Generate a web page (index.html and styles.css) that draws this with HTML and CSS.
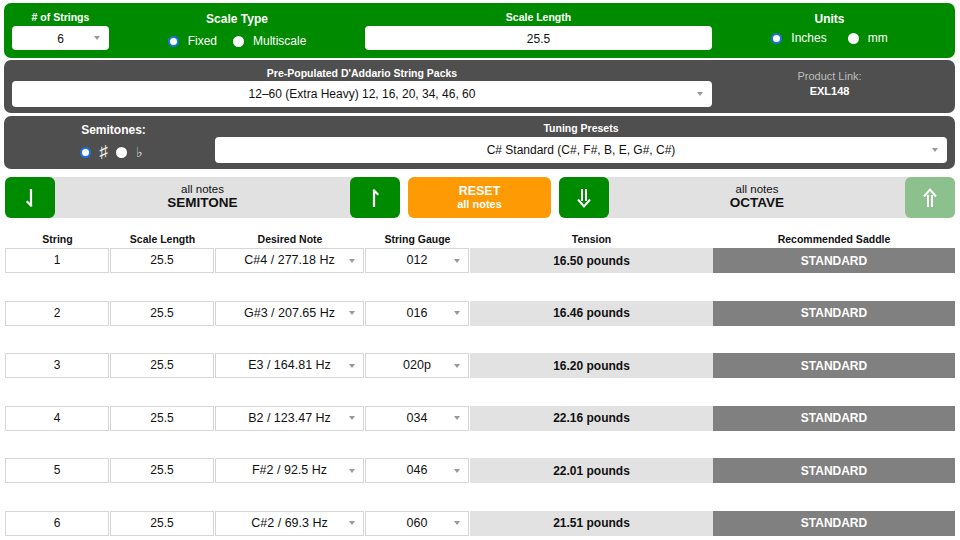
FILE: index.html
```html
<!DOCTYPE html>
<html>
<head>
<meta charset="utf-8">
<link rel="stylesheet" href="styles.css">
</head>
<body>
<div class="page">
  <section class="panel green top">
    <div class="field">
      <div class="lbl">#&nbsp;of Strings</div>
      <div class="box select small">6<span class="caret"></span></div>
    </div>
    <div class="field">
      <div class="lbl big">Scale Type</div>
      <div class="radios">
        <span class="radio on"></span><span class="rtext">Fixed</span>
        <span class="radio"></span><span class="rtext">Multiscale</span>
      </div>
    </div>
    <div class="field">
      <div class="lbl">Scale Length</div>
      <div class="box">25.5</div>
    </div>
    <div class="field units">
      <div class="lbl big">Units</div>
      <div class="radios">
        <span class="radio on"></span><span class="rtext">Inches</span>
        <span class="radio"></span><span class="rtext">mm</span>
      </div>
    </div>
  </section>

  <section class="panel dark packs">
    <div class="field">
      <div class="lbl">Pre-Populated D'Addario String Packs</div>
      <div class="box select tall">12–60 (Extra Heavy) 12, 16, 20, 34, 46, 60<span class="caret"></span></div>
    </div>
    <div class="product">
      <div class="plabel">Product Link:</div>
      <div class="pcode">EXL148</div>
    </div>
  </section>

  <section class="panel dark tuning">
    <div class="semi">
      <div class="lbl big">Semitones:</div>
      <div class="radios semi-r">
        <span class="radio on"></span><span class="acc">♯</span>
        <span class="radio"></span><span class="acc flat">♭</span>
      </div>
    </div>
    <div class="field">
      <div class="lbl">Tuning Presets</div>
      <div class="box select tall">C# Standard (C#, F#, B, E, G#, C#)<span class="caret"></span></div>
    </div>
  </section>

  <section class="shift">
    <div class="group">
      <div class="btn g">
        <svg width="12" height="20" viewBox="0 0 12 20"><path d="M7 2 V17.5 M7 17.5 L3.5 14" stroke="#fff" stroke-width="2.2" fill="none" stroke-linecap="square"/></svg>
      </div>
      <div class="gtext"><div class="small-t">all notes</div><div class="big-t">SEMITONE</div></div>
      <div class="btn g">
        <svg width="12" height="20" viewBox="0 0 12 20"><path d="M5 18 V2.5 M5 2.5 L8.5 6" stroke="#fff" stroke-width="2.2" fill="none" stroke-linecap="square"/></svg>
      </div>
    </div>
    <div class="btn reset"><div class="rt">RESET</div><div class="rs">all notes</div></div>
    <div class="group">
      <div class="btn g">
        <svg width="18" height="22" viewBox="0 0 18 22"><path d="M7 2 V14 M11 2 V14 M3 12.5 L9 19.5 L15 12.5" stroke="#fff" stroke-width="2" fill="none" stroke-linejoin="miter"/></svg>
      </div>
      <div class="gtext"><div class="small-t">all notes</div><div class="big-t">OCTAVE</div></div>
      <div class="btn lg">
        <svg width="18" height="22" viewBox="0 0 18 22"><path d="M7 20 V8 M11 20 V8 M3 9.5 L9 2.5 L15 9.5" stroke="#fff" stroke-width="2" fill="none" stroke-linejoin="miter"/></svg>
      </div>
    </div>
  </section>

  <section class="table">
    <div class="thead">
      <div>String</div><div>Scale Length</div><div>Desired Note</div><div>String Gauge</div><div>Tension</div><div>Recommended Saddle</div>
    </div>
    <div class="rows">
      <div class="row"><div class="cell">1</div><div class="cell">25.5</div><div class="cell sel">C#4 / 277.18 Hz<span class="caret"></span></div><div class="cell sel">012<span class="caret"></span></div><div class="tension">16.50 pounds</div><div class="saddle">STANDARD</div></div>
      <div class="row"><div class="cell">2</div><div class="cell">25.5</div><div class="cell sel">G#3 / 207.65 Hz<span class="caret"></span></div><div class="cell sel">016<span class="caret"></span></div><div class="tension">16.46 pounds</div><div class="saddle">STANDARD</div></div>
      <div class="row"><div class="cell">3</div><div class="cell">25.5</div><div class="cell sel">E3 / 164.81 Hz<span class="caret"></span></div><div class="cell sel">020p<span class="caret"></span></div><div class="tension">16.20 pounds</div><div class="saddle">STANDARD</div></div>
      <div class="row"><div class="cell">4</div><div class="cell">25.5</div><div class="cell sel">B2 / 123.47 Hz<span class="caret"></span></div><div class="cell sel">034<span class="caret"></span></div><div class="tension">22.16 pounds</div><div class="saddle">STANDARD</div></div>
      <div class="row"><div class="cell">5</div><div class="cell">25.5</div><div class="cell sel">F#2 / 92.5 Hz<span class="caret"></span></div><div class="cell sel">046<span class="caret"></span></div><div class="tension">22.01 pounds</div><div class="saddle">STANDARD</div></div>
      <div class="row"><div class="cell">6</div><div class="cell">25.5</div><div class="cell sel">C#2 / 69.3 Hz<span class="caret"></span></div><div class="cell sel">060<span class="caret"></span></div><div class="tension">21.51 pounds</div><div class="saddle">STANDARD</div></div>
    </div>
  </section>
</div>
</body>
</html>
```

FILE: styles.css
```css
* { box-sizing: border-box; }
html, body { margin: 0; padding: 0; background: #fff; }
body { font-family: "Liberation Sans", Arial, sans-serif; color: #111; width: 960px; height: 540px; overflow: hidden; }
.page { padding: 3px 5px 0 4px; }

.panel { border-radius: 7px; color: #fff; }
.green { background: #008a00; }
.dark { background: #4f4f4f; }

.top { height: 55px; display: grid; grid-template-columns: 97px 256px 347px 1fr; padding: 0 8px; }
.field { display: flex; flex-direction: column; align-items: center; }
.lbl { font-size: 10.5px; font-weight: bold; line-height: 12px; margin-top: 8px; height: 15px; text-align: center; }
.lbl.big { font-size: 12px; line-height: 14px; margin-top: 9px; }
.box { position: relative; width: 100%; height: 24px; background: #fff; border-radius: 4px; color: #111; font-size: 12px; display: flex; align-items: center; justify-content: center; }
.top .box { padding-top: 1px; }
.box.tall { height: 26px; }
.caret { position: absolute; right: 9px; top: 50%; margin-top: -2px; width: 0; height: 0; border-left: 3px solid transparent; border-right: 3px solid transparent; border-top: 4px solid #999; }

.radios { display: flex; align-items: center; font-size: 12px; }
.top .radios { margin-top: 7px; }
.radio { width: 11px; height: 11px; border-radius: 50%; background: #fff; display: inline-block; flex: none; }
.radio.on { border: 2.5px solid #1a73e8; }
.rtext { margin: 0 16px 0 9px; }
.rtext:last-child { margin-right: 0; }
.top .units .radios { margin-top: 4px; }
.units .rtext { margin: 0 21px 0 9px; }
.units .rtext:last-child { margin-right: 0; }

.packs { margin-top: 2px; height: 53px; display: grid; grid-template-columns: 700px 1fr; padding: 0 8px; }
.packs .lbl { margin-top: 7px; height: 14px; }
.product { display: flex; flex-direction: column; align-items: center; padding-top: 10px; }
.plabel { font-size: 11px; color: #bdbdbd; line-height: 13px; }
.pcode { font-size: 11px; font-weight: bold; line-height: 13px; margin-top: 2px; }

.tuning { margin-top: 3px; height: 53px; display: grid; grid-template-columns: 203px 1fr; padding: 0 8px; }
.tuning .lbl { margin-top: 6px; height: 15px; }
.semi { display: flex; flex-direction: column; align-items: center; }
.semi .lbl.big { margin-top: 7px; }
.semi-r { margin-top: 7px; margin-right: 4px; }
.acc { font-size: 17px; margin: 0 8px 0 8px; line-height: 14px; color: #eee; }
.acc.flat { font-size: 14px; margin: 0 0 0 9px; color: #ddd; }

.shift { margin-top: 8px; display: grid; grid-template-columns: 395px 143px 1fr; gap: 8px; padding-left: 1px; height: 41px; }
.group { display: flex; background: #e1e1e1; border-radius: 6px; }
.btn { width: 50px; height: 41px; border-radius: 6px; display: flex; align-items: center; justify-content: center; flex: none; }
.btn.g { background: #008a00; }
.btn.lg { background: #8cc08c; }
.gtext { flex: 1; display: flex; flex-direction: column; align-items: center; justify-content: center; padding-bottom: 2px; }
.small-t { font-size: 11.5px; line-height: 12px; }
.big-t { font-size: 13.5px; font-weight: bold; line-height: 15px; }
.btn.reset { width: 143px; background: #fd9a04; color: #fff; flex-direction: column; font-weight: bold; }
.rt { font-size: 12.5px; line-height: 13px; }
.rs { font-size: 11px; line-height: 12px; }

.table { padding-left: 1px; margin-top: 15px; }
.thead, .row { display: grid; grid-template-columns: 105px 105px 150px 105px 243px 242px; }
.thead div { text-align: center; font-size: 10.5px; font-weight: bold; line-height: 13px; }
.rows { margin-top: 2px; display: flex; flex-direction: column; gap: 27.5px; }
.row { height: 25px; }
.cell { position: relative; border: 1px solid #d6d6d6; background: #fff; display: flex; align-items: center; justify-content: center; font-size: 12px; margin-right: 1px; padding-bottom: 1px; }
.cell.sel { font-size: 12.5px; }
.cell.sel .caret { right: 8px; }
.tension { background: #e2e2e2; display: flex; align-items: center; justify-content: center; font-size: 12px; font-weight: bold; }
.saddle { background: #808080; color: #fff; display: flex; align-items: center; justify-content: center; font-size: 12px; font-weight: bold; }
```
